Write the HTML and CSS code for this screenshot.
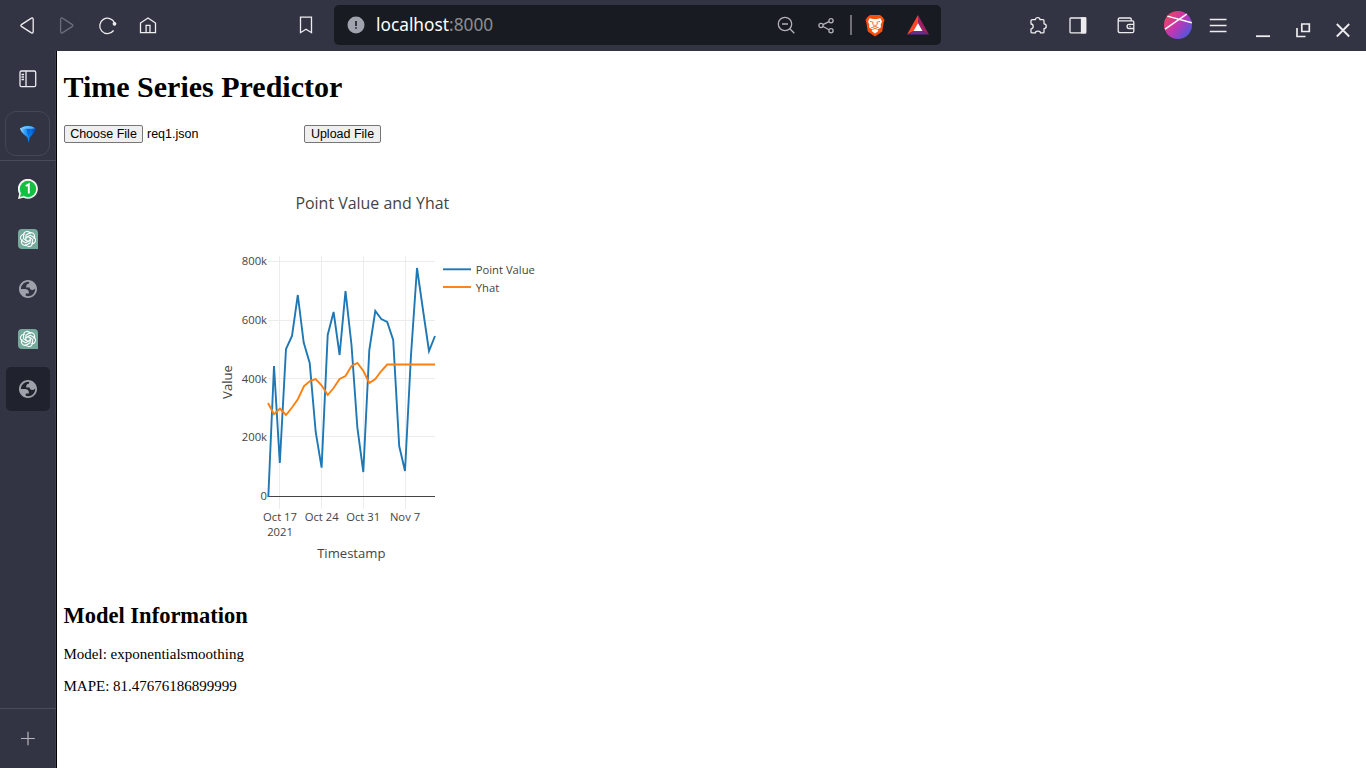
FILE: index.html
```html
<!DOCTYPE html>
<html lang="en">
<head>
<meta charset="utf-8">
<title>Time Series Predictor</title>
<link rel="stylesheet" href="styles.css">
</head>
<body>
<svg class="defs" aria-hidden="true">
  <defs>
    <symbol id="gpt" viewBox="0 0 20 20">
      <path d="M4 0H16Q20 0 20 4V20H4Q0 20 0 16V4Q0 0 4 0Z" fill="#74aa9c"/>
      <g fill="none" stroke="#fff" stroke-width="1.05" stroke-linejoin="round">
        <path d="M7.9 12V6.2L11 4.3C15.2 2.1 18.2 6.6 15.6 9.6"/>
        <path d="M7.9 12V6.2L11 4.3C15.2 2.1 18.2 6.6 15.6 9.6" transform="rotate(60 10 10)"/>
        <path d="M7.9 12V6.2L11 4.3C15.2 2.1 18.2 6.6 15.6 9.6" transform="rotate(120 10 10)"/>
        <path d="M7.9 12V6.2L11 4.3C15.2 2.1 18.2 6.6 15.6 9.6" transform="rotate(180 10 10)"/>
        <path d="M7.9 12V6.2L11 4.3C15.2 2.1 18.2 6.6 15.6 9.6" transform="rotate(240 10 10)"/>
        <path d="M7.9 12V6.2L11 4.3C15.2 2.1 18.2 6.6 15.6 9.6" transform="rotate(300 10 10)"/>
      </g>
    </symbol>
    <symbol id="globe" viewBox="0.9 0.9 22.2 22.2">
      <path fill="#a0a2ab" fill-rule="evenodd" d="M12 2C6.48 2 2 6.48 2 12s4.48 10 10 10 10-4.48 10-10S17.52 2 12 2ZM4 12h4.4c3.407.022 4.922 1.73 4.543 5.127H9.488v2.47a8.004 8.004 0 0 0 10.498-8.083C19.327 12.504 18.332 13 17 13c-2.137 0-3.206-.916-3.206-2.75h-3.748c-.274-2.728.683-4.092 2.87-4.092 0-.975.327-1.597.811-1.97A8.004 8.004 0 0 0 4 12Z"/>
    </symbol>
  </defs>
</svg>
<header class="toolbar">
  <nav class="history">
    <svg class="icon" viewBox="0 0 20 20"><path d="M12.4 2.1Q14 1.5 14.2 3.3V15.7Q14 17.5 12.4 16.9L2.4 10.4Q1.4 9.5 2.4 8.6Z"/></svg>
    <svg class="icon faded" viewBox="0 0 20 20"><path d="M4.4 2.1Q2.8 1.5 2.6 3.3V15.7Q2.8 17.5 4.4 16.9L14.4 10.4Q15.4 9.5 14.4 8.6Z"/></svg>
    <svg class="icon" viewBox="0 0 20 20"><path d="M15.6 14.5A7.7 7.7 0 1 1 16.6 7"/><circle cx="16.5" cy="7.8" r="1.9" fill="#ededf0" stroke="none"/></svg>
    <svg class="icon" viewBox="0 0 20 20"><path d="M2.5 7L10 2L17.5 7V16.7H2.5ZM8.1 16.7V9.3H12V16.7"/></svg>
  </nav>
  <svg class="icon bookmark" viewBox="0 0 20 20"><path d="M4.5 1.2H15.5V16.7L10 13.3L4.5 16.7Z"/></svg>
  <div class="address">
    <svg class="site-info" viewBox="0 0 18 18"><circle cx="9" cy="9" r="8.5" fill="#a0a3ad"/><path d="M9 5V10M9 11.2V12.7" stroke="#191b22" stroke-width="1.6"/></svg>
    <span class="url">localhost<span class="port">:8000</span></span>
    <svg class="icon dim" viewBox="0 0 20 20"><circle cx="9" cy="9" r="6.7"/><path d="M6 9H12M13.8 13.8L18.3 18.3"/></svg>
    <svg class="icon dim share" viewBox="0 0 20 20"><circle cx="5" cy="10.5" r="2.1"/><circle cx="15" cy="5.7" r="2.1"/><circle cx="15" cy="15.8" r="2.1"/><path d="M7 9.6L13 6.7M7 11.5L13 14.8"/></svg>
    <span class="divider"></span>
    <svg class="brave" viewBox="0 0 20 23"><path d="M5 1H15L17.8 3.2L19.5 6.3L18.8 8L17.2 17.5L10 22.5L2.8 17.5L1.2 8L.5 6.3L2.2 3.2Z" fill="#fb4f0d"/><path d="M4.6 4.2L8 5.1H12L15.4 4.2L17 7.5L15.7 10.8L16 13.2L12.6 15.7L13.4 17L10 19.4L6.6 17L7.4 15.7L4 13.2L4.3 10.8L3 7.5Z" fill="#fff"/><path d="M5 7.4L8.2 8.2L7.5 10.2L9 11.4V13L6.2 13.7M15 7.4L11.8 8.2L12.5 10.2L11 11.4V13L13.8 13.7M7.3 15.7L10 14.2L12.7 15.7M10 10.5V13.3" fill="none" stroke="#fb4f0d" stroke-width=".8"/></svg>
    <svg class="bat" viewBox="0 0 22 20"><path d="M11 0V8L6.8 16L0 19.5Z" fill="#ff4724"/><path d="M11 0L22 19.5L15.2 16L11 8Z" fill="#9e1f63"/><path d="M0 19.5L6.8 16H15.2L22 19.5Z" fill="#662d91"/><path d="M11 8L15.5 16H6.5Z" fill="#fff"/></svg>
  </div>
  <div class="tools">
    <svg class="icon" viewBox="0 0 20 20"><path d="M4.2 3.7H7.3C7.3 1 12 1 12 3.7H15Q16 3.7 16 4.7V7.8C19 7.8 19 12.6 16 12.6V15.9Q16 16.9 15 16.9H12.5C12.3 14.5 7.6 14.5 7.4 16.9H4.2Q3 16.9 3 15.9V12.9C5.9 12.9 5.9 8 3 8V4.7Q3 3.7 4.2 3.7Z" stroke-linejoin="round"/></svg>
    <svg class="icon" viewBox="0 0 20 20"><rect x="2" y="2" width="15.6" height="14.8" rx=".7"/><path d="M13.5 2H17.6V16.8H13.5Z" fill="#ededf0"/></svg>
    <svg class="icon wallet" viewBox="0 0 20 20"><path d="M15.2 4.7V3.2Q15.2 2 14 2H3.7Q2.2 2 2.2 3.5V14.7Q2.2 16.7 4.2 16.7H16.3Q17.8 16.7 17.8 15.2V6.2Q17.8 4.8 16.5 4.8H3.7Q2.2 4.8 2.2 3.5M17.8 8.4H13Q11.1 8.4 11.1 10.4Q11.1 12.5 13 12.5H17.8M13.5 10.4H14.5"/></svg>
    <svg class="avatar" viewBox="0 0 28 28">
      <defs><linearGradient id="av" x1="0" y1=".1" x2="1" y2=".9"><stop offset=".05" stop-color="#f4455d"/><stop offset=".5" stop-color="#bd37b5"/><stop offset="1" stop-color="#365ee8"/></linearGradient></defs>
      <circle cx="14" cy="14" r="14" fill="url(#av)"/><path d="M3.3 5.1L27.8 11.8M1 18.2L22.7 3.2" stroke="#fff" stroke-width="1.4"/>
    </svg>
    <svg class="icon" viewBox="0 0 20 20"><path d="M1.8 3.5H18.5M1.8 9.5H18.5M1.8 15.5H18.5"/></svg>
  </div>
  <div class="window-controls">
    <svg class="icon" viewBox="0 0 20 20"><path d="M3 16.2H17" stroke-width="1.8"/></svg>
    <svg class="icon" viewBox="0 0 20 20"><path d="M8.8 4H16.3V11.5H8.8ZM4 8V16.5H12.5" stroke-width="1.7"/></svg>
    <svg class="icon" viewBox="0 0 20 20"><path d="M3.8 4L16.2 16.5M16.2 4L3.8 16.5" stroke-width="1.8"/></svg>
  </div>
</header>
<div class="workspace">
  <aside class="tabs">
    <div class="tab panel-toggle"><svg class="icon" viewBox="0 0 20 20"><rect x="2" y="2" width="15.7" height="15.7" rx="1.5"/><path d="M8 2V18M3.5 5.5H6M3.5 8H6M3.5 10.5H6"/></svg></div>
    <div class="tab pinned"><svg class="gem" viewBox="0 0 20 20">
      <defs><linearGradient id="gem" x1="0" x2="1"><stop offset="0" stop-color="#a8dcff"/><stop offset=".3" stop-color="#2ca1ff"/><stop offset=".65" stop-color="#0876e8"/><stop offset="1" stop-color="#063d9b"/></linearGradient></defs>
      <path d="M1 4.5Q10-1.5 19 4.5Q18 9 12 14.2L10.8 20L9.2 14.2Q2.5 9.2 1 4.5Z" fill="url(#gem)"/><path d="M8 4.5L13.5 4L10.8 13.5Z" fill="#0869d8"/><path d="M2 4.2Q10-1 18 4.2Q10 5.5 2 4.2Z" fill="#94d4ff" opacity=".65"/></svg></div>
    <div class="tab chat"><svg class="favicon" viewBox="0 0 20 20"><path d="M0 20L1.2 14.8A10 10 0 1 1 5.5 18.8Z" fill="#f4f4f4"/><circle cx="10" cy="10" r="8.2" fill="#13bf40"/><path d="M2 18L3 14L6 17Z" fill="#13bf40"/><path d="M7.7 7L10.8 5.3V14.5" fill="none" stroke="#fff" stroke-width="1.9"/></svg></div>
    <div class="tab"><svg class="favicon"><use href="#gpt"/></svg></div>
    <div class="tab"><svg class="favicon"><use href="#globe"/></svg></div>
    <div class="tab"><svg class="favicon"><use href="#gpt"/></svg></div>
    <div class="tab active"><svg class="favicon"><use href="#globe"/></svg></div>
    <div class="new-tab"><svg class="icon" viewBox="0 0 20 20"><path d="M3 10.5H16.8M10 3.8V17.3" stroke="#b5b6bd" stroke-width="1.2"/></svg></div>
  </aside>
  <main class="page">
    <h1 class="title">Time Series Predictor</h1>
    <form class="upload">
      <button class="button choose" type="button">Choose File</button>
      <span class="filename">req1.json</span>
      <button class="button submit" type="button">Upload File</button>
    </form>
    <svg class="chart" viewBox="213 157 330 422">
      <g stroke="#ececec">
        <path d="M268 261.5H435M268 320.5H435M268 378.5H435M268 436.5H435M279.5 256V509M321.5 256V509M363.5 256V509M405.5 256V509"/>
      </g>
      <path d="M268 496.5H435" stroke="#444"/>
      <g fill="none" stroke-width="1.9">
        <path stroke="#1f77b4" d="M268.3 497L274 366L279.8 463L286 349L292 336L297.8 295L303.7 342.5L309.7 363L315.7 432L321.6 467.7L327.7 335L333.6 312L339.6 355L345.5 291L351.5 345L357.4 428L363.3 472L369.3 350L375.3 311L381.3 319L387.2 322L393.2 340L399.2 446L405 471L411 355L417 268L423 310L429 351L435 336"/>
        <path stroke="#ff7f0e" d="M268 403L274 414.2L280 408.5L286 415L292 407.5L298 399L304 386L310 381L315.7 379L321.7 385.5L327.7 395L333.6 388L339.6 379L345.5 376L351.5 366L357.4 363L363.4 371L369.3 383L375.3 379L381.3 371L387.2 364.5H435"/>
        <path stroke="#1f77b4" d="M443 269.3H471"/><path stroke="#ff7f0e" d="M443 287H471"/>
      </g>
      <g class="ticks">
        <g text-anchor="end"><text x="267" y="265">800k</text><text x="267" y="324">600k</text><text x="267" y="383">400k</text><text x="267" y="441">200k</text><text x="267" y="500">0</text></g>
        <g text-anchor="middle"><text x="280" y="521">Oct 17</text><text x="280" y="536">2021</text><text x="321.7" y="521">Oct 24</text><text x="363.2" y="521">Oct 31</text><text x="405" y="521">Nov 7</text></g>
        <text x="475.7" y="274">Point Value</text><text x="475.7" y="292">Yhat</text>
      </g>
      <text class="chart-title" x="372.3" y="209">Point Value and Yhat</text>
      <text class="axis-title" x="351.3" y="558">Timestamp</text>
      <text class="axis-title" transform="translate(231.5 382) rotate(-90)">Value</text>
    </svg>
    <h2 class="subtitle">Model Information</h2>
    <p class="info">Model: exponentialsmoothing</p>
    <p class="info">MAPE: 81.47676186899999</p>
  </main>
</div>
</body>
</html>
```
FILE: styles.css
```css
* { box-sizing: border-box; }
body { margin: 0; height: 768px; overflow: hidden; display: flex; flex-direction: column; background: #fff; }
svg { display: block; flex: none; }
.defs { width: 0; height: 0; position: absolute; }
.toolbar { flex: none; height: 51px; display: flex; align-items: center; background: #323443; }
.icon { width: 20px; height: 20px; fill: none; stroke: #ededf0; stroke-width: 1.3; }
.faded { stroke: #6b6d79; }
.dim { stroke: #b2b3b8; }
.history { display: flex; gap: 20px; margin-left: 19px; align-items: center; }
.history .icon:first-child { margin-right: -1px; }
.bookmark { margin-left: 139px; }
.history .icon:nth-child(3) { margin-right: 0; }
.history { margin-right: -1px; }
.address { width: 607px; height: 40px; margin-left: 18px; margin-bottom: 1px; display: flex; align-items: center; background: #191b22; border-radius: 5px; }
.site-info { width: 18px; height: 18px; margin-left: 13px; }
.url { width: 400px; margin-left: 11px; font: 17.3px/24px "Noto Sans", sans-serif; color: #fff; }
.port { color: #8c8d91; }
.share { margin-left: 20px; }
.divider { width: 2px; height: 20px; margin-left: 14px; background: #707177; }
.brave { width: 20px; height: 23px; margin-left: 13px; }
.bat { width: 22px; height: 20px; margin-left: 22px; }
.tools { display: flex; align-items: center; margin-left: 87px; }
.tools .icon + .icon { margin-left: 20px; }
.tools .icon + .wallet { margin-left: 28px; }
.avatar { width: 28px; height: 28px; margin: 0 16px 1px 28px; }
.avatar + .icon { margin-left: 0; }
.window-controls { display: flex; gap: 20px; margin: 9px 0 0 25px; }
.workspace { flex: 1; min-height: 0; display: flex; }
.tabs { width: 57px; display: flex; flex-direction: column; align-items: center; background: #323443; border-right: 1px solid #000; box-shadow: inset -1px 0 #3f404d; }
.tab { width: 44px; height: 44px; flex: none; display: grid; place-items: center; border-radius: 5px; margin-bottom: 6px; }
.panel-toggle { margin: 6px 0 10px; }
.pinned { width: 45px; height: 45px; border: 1px solid #454754; border-radius: 11px; margin: 0 1px 4px 0; }
.gem { width: 18px; height: 19px; margin-left: 1px; }
.favicon { width: 20px; height: 20px; }
.chat { width: 56px; height: 51px; border-top: 1px solid #494b57; border-radius: 0; margin-bottom: 6px; padding-top: 6px; }
.active { background: #20222d; margin: 0; }
.new-tab { width: 56px; height: 60px; padding-bottom: 2px; margin-top: auto; display: grid; place-items: center; border-top: 1px solid #494b57; }
.page { flex: 1; padding: 19px 7px 0 6.5px; font-family: "Liberation Serif", serif; color: #000; }
.title { margin: 0; font-size: 30px; line-height: 34px; }
.upload { display: flex; align-items: center; margin: 21px 0 0 .5px; height: 18px; font: 12.5px "Liberation Sans", sans-serif; }
.button { height: 18px; padding: 0; border: 1px solid #767676; border-radius: 2px; background: #efefef; color: #000; font: 12.5px/15px "Liberation Sans", sans-serif; white-space: nowrap; }
.choose { width: 79px; }
.filename { width: 157px; margin-left: 4px; }
.submit { width: 77px; }
.chart { width: 330px; height: 422px; margin: 14px 0 0 149.5px; font-family: "Open Sans", sans-serif; fill: #444; }
.ticks { font-size: 11.25px; }
.chart-title { font-size: 15.95px; text-anchor: middle; }
.axis-title { font-size: 13.1px; text-anchor: middle; }
.subtitle { margin: 24px 0 0; font-size: 22.5px; line-height: 26px; }
.info { margin: 17px 0 15px; font-size: 15px; line-height: 17px; }
.info + .info { margin-top: 15px; }
```
